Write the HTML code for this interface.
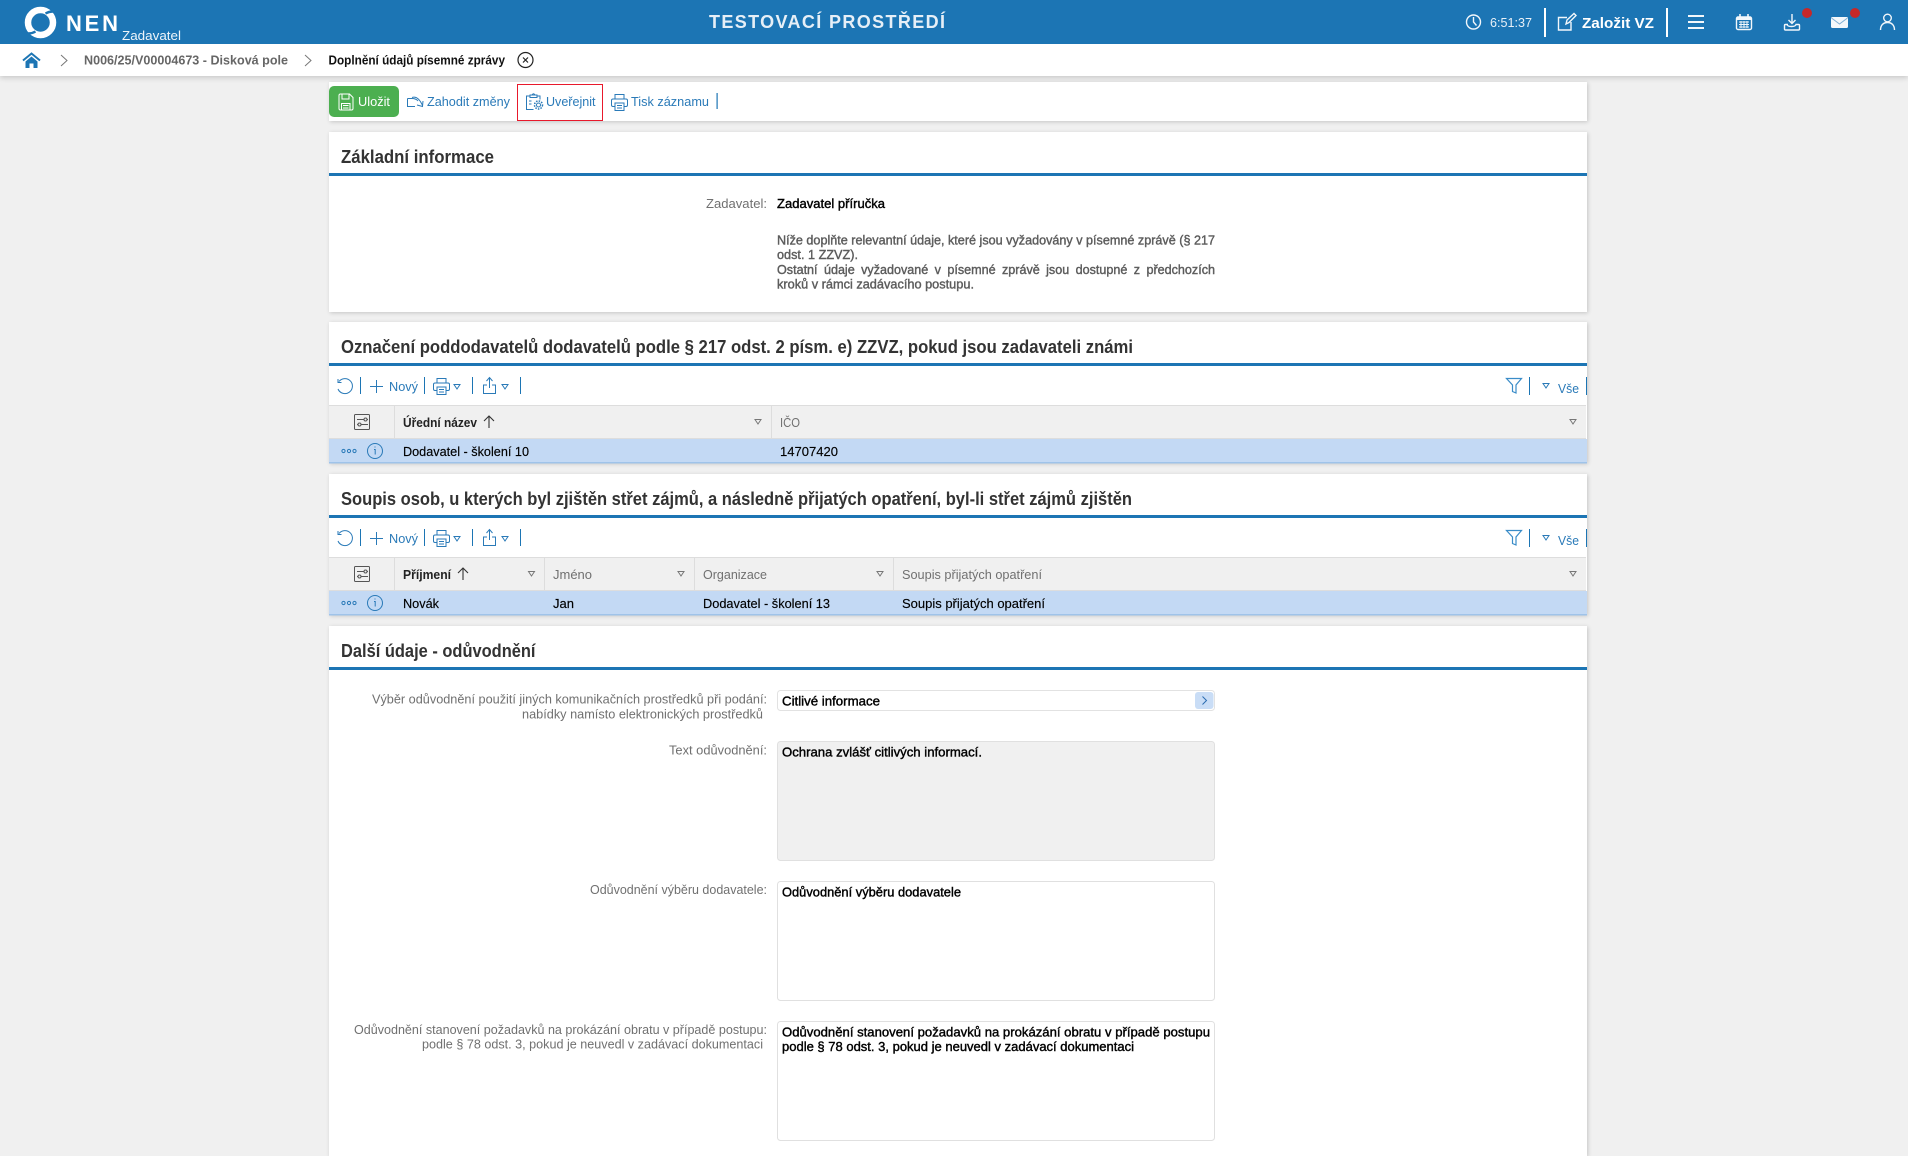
<!DOCTYPE html>
<html lang="cs">
<head>
<meta charset="utf-8">
<title>Doplnění údajů písemné zprávy</title>
<style>
html,body{margin:0;padding:0;background:#f0f0f0;width:1908px;height:1146px;overflow:hidden;font-family:"Liberation Sans",sans-serif}
.b{position:absolute}
.p{position:absolute;left:329px;width:1258px;background:#fff;box-shadow:1px 1px 4px rgba(0,0,0,.18)}
svg{position:absolute;left:0;top:0}
text{font-family:"Liberation Sans",sans-serif;font-size:13px;white-space:pre}
.l{fill:#707070}
.v{fill:#000;stroke:#000;stroke-width:.4}
.g{fill:#5c5c5c;stroke:#5c5c5c;stroke-width:.4}
.r{fill:#000;stroke:#000;stroke-width:.15}
.h{font-size:18px;font-weight:bold;fill:#333}
.a{fill:#2a7ab8}
.ic{fill:none;stroke:#2a7ab8;stroke-width:1}
.tg{fill:none;stroke:#777;stroke-width:1}
.hi{fill:none;stroke:#f2f7fb;stroke-width:1.4}
</style>
</head>
<body>
<div class="b" style="left:0;top:44px;width:1908px;height:32px;background:#fff;box-shadow:0 2px 5px rgba(0,0,0,.16)"></div>
<div class="b" style="left:0;top:0;width:1908px;height:44px;background:#1c75b4"></div>

<div class="p" style="top:82px;height:39px"></div>
<div class="p" style="top:132px;height:180px"></div>
<div class="p" style="top:322px;height:141px"></div>
<div class="p" style="top:474px;height:141px"></div>
<div class="p" style="top:626px;height:530px"></div>

<svg width="1908" height="1146" viewBox="0 0 1908 1146" xmlns="http://www.w3.org/2000/svg">
<!-- header logo -->
<g transform="translate(40.5 22.5)">
<circle r="12.500" fill="none" stroke="#fff" stroke-width="6.500"/>
<path d="M5-9Q12-13 19-9M-5 9Q-12 13-19 9" fill="none" stroke="#1c75b4" stroke-width="2.400"/>
</g>
<text x="66" y="31" textLength="52" lengthAdjust="spacing" style="font-size:22px;font-weight:bold" fill="#fff">NEN</text>
<text x="122" y="40" textLength="59" lengthAdjust="spacingAndGlyphs" fill="#eef5fa">Zadavatel</text>
<text x="709" y="28" textLength="236" lengthAdjust="spacing" style="font-size:18px;font-weight:bold" fill="#e6eff7">TESTOVACÍ PROSTŘEDÍ</text>

<!-- header right -->
<circle class="hi" cx="1473.5" cy="22" r="7"/><path class="hi" d="M1473.5 17v5l3 3.5"/>
<text x="1490" y="27" textLength="42" lengthAdjust="spacingAndGlyphs" fill="#e8f0f7">6:51:37</text>
<rect x="1544" y="8" width="2" height="29" fill="#fff"/>
<path class="hi" d="M1567 17.5h-8.5v12.5h12.5v-8M1566 24l1-4 7-6.5 2 2-7 7z"/>
<text x="1582" y="28" textLength="72" lengthAdjust="spacingAndGlyphs" style="font-size:15px;font-weight:bold" fill="#fff">Založit VZ</text>
<rect x="1666" y="8" width="2" height="29" fill="#fff"/>
<path d="M1688 16h16M1688 22h16M1688 28h16" stroke="#f2f7fb" stroke-width="2" fill="none"/>
<rect class="hi" x="1736.5" y="17" width="15" height="12.5" rx="1.5"/>
<rect x="1737" y="17" width="14" height="3" fill="#f2f7fb"/>
<path d="M1740 14v4M1748 14v4" stroke="#f2f7fb" stroke-width="1.600"/>
<path d="M1739 22h10M1739 24.500h10M1739 27h10M1741 21v7M1744 21v7M1747 21v7" stroke="#f2f7fb" stroke-width="1"/>
<path class="hi" d="M1792 14v9M1788.5 20l3.500 3.500 3.500-3.500M1788 24.500h-2.500q-1 0-1 1v3.500q0 1 1 1h13q1 0 1-1v-3.500q0-1-1-1h-2.500q-.5 2-4.500 2t-4.500-2"/>
<circle cx="1807" cy="13" r="5" fill="#c62828"/>
<rect x="1831" y="17" width="17" height="11" rx="1.500" fill="#f4f8fb"/>
<path d="M1831.500 18l8 6 8-6" stroke="#7fb0d6" stroke-width="1" fill="none"/>
<circle cx="1855" cy="13" r="5" fill="#c62828"/>
<circle class="hi" cx="1887.500" cy="18" r="3.800"/>
<path class="hi" d="M1880.500 30c0-5 3-7.500 7-7.500s7 2.500 7 7.500"/>

<!-- breadcrumb -->
<path d="M23 60.500 31.500 53.500 40 60.500" fill="none" stroke="#1c75b4" stroke-width="2"/>
<path d="M25.500 61.500 31.500 56.500 37.500 61.500V68H33.500V63.500H29.500V68H25.500Z" fill="#1c75b4"/>
<path d="M61 55l6 5.500-6 5.500" fill="none" stroke="#777" stroke-width="1"/>
<text x="84" y="64.500" textLength="204" lengthAdjust="spacingAndGlyphs" style="font-weight:bold" fill="#666">N006/25/V00004673 - Disková pole</text>
<path d="M305 55l6 5.500-6 5.500" fill="none" stroke="#777" stroke-width="1"/>
<text x="328.500" y="64.500" textLength="176.500" lengthAdjust="spacingAndGlyphs" style="font-weight:bold" fill="#111">Doplnění údajů písemné zprávy</text>
<circle cx="525.500" cy="60" r="7.500" fill="none" stroke="#222" stroke-width="1.200"/>
<path d="M523 57.500l5 5M528 57.500l-5 5" stroke="#222" stroke-width="1.200"/>

<!-- toolbar -->
<rect x="329" y="86" width="70" height="31" rx="5" fill="#4caf50"/>
<path d="M339 95.500q0-1.500 1.500-1.500h9l3.500 3.500v11q0 1.500-1.500 1.500h-11q-1.500 0-1.500-1.500zM342 94.500v4.500h7v-4.500M341.500 110v-6.500h8.500v6.500M343 105.500h5.500M343 108h5.500" fill="none" stroke="#fff" stroke-width="1"/>
<text x="358" y="106" textLength="32" lengthAdjust="spacingAndGlyphs" fill="#fff">Uložit</text>
<path class="ic" d="M407.500 98.500h5M407.500 98.500v8h7.500M412 97.500q6-2 10.500 8M417 105l5.500 1.500 .5-5.500M412 98.500q4 0 6 2.500"/>
<text class="a" x="427" y="106" textLength="83" lengthAdjust="spacingAndGlyphs">Zahodit změny</text>
<rect x="517.500" y="84.500" width="85" height="36" fill="none" stroke="#e8192c" stroke-width="1"/>
<path class="ic" d="M530 96h-3.500v13.500h7M537 96h3v3.500M530 95h7v2.500h-7zM532 95q1.500-2.500 3 0M529 101h2.500M529 104h2.500"/>
<circle class="ic" cx="538.500" cy="105" r="2"/>
<circle cx="538.500" cy="105" r="4" fill="none" stroke="#2a7ab8" stroke-width="1.500" stroke-dasharray="1.500 1.200"/>
<text class="a" x="546" y="106" textLength="49.500" lengthAdjust="spacingAndGlyphs">Uveřejnit</text>
<g transform="translate(178 16)"><path class="ic" d="M437 83v-4.500h9v4.500M437 90.500h-2q-1.500 0-1.500-1.500v-4.500q0-1.500 1.500-1.500h13q1.500 0 1.500 1.500V389q0 1.500-1.500 1.500h-2M437 87h9v7.500h-9zM439 89.500h5M439 92h5" style="display:none"/><path class="ic" d="M437 83v-4.500h9v4.500M437 90.500h-2q-1.500 0-1.500-1.500v-4.500q0-1.500 1.500-1.500h13q1.500 0 1.500 1.500V89q0 1.500-1.500 1.500h-2M437 87h9v7.500h-9zM439 89.500h5M439 92h5"/></g>
<text class="a" x="631" y="106" textLength="78" lengthAdjust="spacingAndGlyphs">Tisk záznamu</text>
<rect x="716.500" y="93" width="1.200" height="16" fill="#1c75b4"/>

<!-- section 1 -->
<text class="h" x="341" y="163" textLength="153" lengthAdjust="spacingAndGlyphs">Základní informace</text>
<rect x="329" y="173" width="1258" height="3" fill="#1c75b4"/>
<text class="l" x="706" y="208" textLength="61" lengthAdjust="spacingAndGlyphs">Zadavatel:</text>
<text class="v" x="777" y="208" textLength="108" lengthAdjust="spacingAndGlyphs">Zadavatel příručka</text>
<text class="g" x="777" y="244.500" textLength="438" lengthAdjust="spacingAndGlyphs">Níže doplňte relevantní údaje, které jsou vyžadovány v písemné zprávě (§ 217</text>
<text class="g" x="777" y="259" textLength="81" lengthAdjust="spacingAndGlyphs">odst. 1 ZZVZ).</text>
<text class="g" x="777" y="274" textLength="438" lengthAdjust="spacingAndGlyphs" style="word-spacing:3px">Ostatní údaje vyžadované v písemné zprávě jsou dostupné z předchozích</text>
<text class="g" x="777" y="288.500" textLength="197" lengthAdjust="spacingAndGlyphs">kroků v rámci zadávacího postupu.</text>

<!-- section 2 -->
<text class="h" x="341" y="353" textLength="792" lengthAdjust="spacingAndGlyphs">Označení poddodavatelů dodavatelů podle § 217 odst. 2 písm. e) ZZVZ, pokud jsou zadavateli známi</text>
<rect x="329" y="363" width="1258" height="3" fill="#1c75b4"/>
<!-- grid toolbar 1 -->
<path class="ic" d="M339 381.500A7.500 7.500 0 1 1 338 389M338 379v3.500h3.500"/>
<rect x="360" y="377" width="1" height="17" fill="#1c75b4"/>
<path class="ic" d="M376.500 380v13M370 386.500h13"/>
<text class="a" x="389" y="391" textLength="29" lengthAdjust="spacingAndGlyphs">Nový</text>
<rect x="424" y="377" width="1" height="17" fill="#1c75b4"/>
<path class="ic" d="M437 383v-4.500h9v4.500M437 390.500h-2q-1.500 0-1.500-1.500v-4.500q0-1.500 1.500-1.500h13q1.500 0 1.500 1.500V389q0 1.500-1.500 1.500h-2M437 387h9v7.500h-9zM439 389.500h5M439 392h5"/>
<path class="ic" d="M454 384.500h6l-3 4.500z"/>
<rect x="472" y="377" width="1" height="17" fill="#1c75b4"/>
<path class="ic" d="M487 385h-3.500v8.500h12V385H492M489.500 388v-10M486.500 381l3-3.500 3 3.500"/>
<path class="ic" d="M502 384.500h6l-3 4.500z"/>
<rect x="520" y="377" width="1" height="17" fill="#1c75b4"/>
<path d="M1506.500 378.500h15l-5.500 6.500v8l-3.500-1.500V385z" fill="none" stroke="#3a8cc8" stroke-width="1.200"/>
<rect x="1529" y="377" width="1" height="18" fill="#1c75b4"/>
<path class="ic" d="M1543 383.500h6l-3 4.500z"/>
<text class="a" x="1558" y="393" textLength="21" lengthAdjust="spacingAndGlyphs">Vše</text>
<rect x="1586" y="377" width="1" height="18" fill="#1c75b4"/>
<!-- grid table 1 -->
<rect x="329" y="405" width="1257" height="34" fill="#f0f0f0"/>
<rect x="329" y="405" width="1257" height="1" fill="#ddd"/>
<rect x="329" y="438" width="1257" height="1" fill="#ddd"/>
<rect x="394" y="406" width="1" height="32" fill="#ddd"/>
<rect x="771" y="406" width="1" height="32" fill="#ddd"/>
<rect x="354.500" y="414.500" width="15" height="15" rx="1" fill="none" stroke="#555" stroke-width="1"/>
<path d="M357 419.500h7M367 419.500h1M357 424.500h1M361 424.500h7" stroke="#555" stroke-width="1"/>
<circle cx="365.500" cy="419.500" r="1.500" fill="none" stroke="#555"/><circle cx="359.500" cy="424.500" r="1.500" fill="none" stroke="#555"/>
<text x="403" y="427" textLength="74" lengthAdjust="spacingAndGlyphs" style="font-weight:bold" fill="#222">Úřední název</text>
<path d="M489 428v-12M484 421l5-5 5 5" fill="none" stroke="#333" stroke-width="1.100"/>
<path class="tg" d="M755 419.500h6l-3 4.500z"/>
<text class="l" x="780" y="427" textLength="20" lengthAdjust="spacingAndGlyphs">IČO</text>
<path class="tg" d="M1570 419.500h6l-3 4.500z"/>
<rect x="329" y="439" width="1258" height="24" fill="#c3d9f4"/>
<rect x="329" y="462" width="1258" height="1.500" fill="#9fc3e9"/>
<circle class="ic" cx="343.500" cy="451" r="1.600"/><circle class="ic" cx="349" cy="451" r="1.600"/><circle class="ic" cx="354.500" cy="451" r="1.600"/>
<circle class="ic" cx="375" cy="451" r="7.500"/><path class="ic" d="M375 446.500v1M374 449.500h1.200v5"/>
<text class="r" x="403" y="456" textLength="126" lengthAdjust="spacingAndGlyphs">Dodavatel - školení 10</text>
<text class="r" x="780" y="456" textLength="58" lengthAdjust="spacingAndGlyphs">14707420</text>

<!-- section 3 -->
<text class="h" x="341" y="505" textLength="791" lengthAdjust="spacingAndGlyphs">Soupis osob, u kterých byl zjištěn střet zájmů, a následně přijatých opatření, byl-li střet zájmů zjištěn</text>
<rect x="329" y="515" width="1258" height="3" fill="#1c75b4"/>
<g transform="translate(0 152)">
<path class="ic" d="M339 381.500A7.500 7.500 0 1 1 338 389M338 379v3.500h3.500"/>
<rect x="360" y="377" width="1" height="17" fill="#1c75b4"/>
<path class="ic" d="M376.500 380v13M370 386.500h13"/>
<text class="a" x="389" y="391" textLength="29" lengthAdjust="spacingAndGlyphs">Nový</text>
<rect x="424" y="377" width="1" height="17" fill="#1c75b4"/>
<path class="ic" d="M437 383v-4.500h9v4.500M437 390.500h-2q-1.500 0-1.500-1.500v-4.500q0-1.500 1.500-1.500h13q1.500 0 1.500 1.500V389q0 1.500-1.500 1.500h-2M437 387h9v7.500h-9zM439 389.500h5M439 392h5"/>
<path class="ic" d="M454 384.500h6l-3 4.500z"/>
<rect x="472" y="377" width="1" height="17" fill="#1c75b4"/>
<path class="ic" d="M487 385h-3.500v8.500h12V385H492M489.500 388v-10M486.500 381l3-3.500 3 3.500"/>
<path class="ic" d="M502 384.500h6l-3 4.500z"/>
<rect x="520" y="377" width="1" height="17" fill="#1c75b4"/>
<path d="M1506.500 378.500h15l-5.500 6.500v8l-3.500-1.500V385z" fill="none" stroke="#3a8cc8" stroke-width="1.200"/>
<rect x="1529" y="377" width="1" height="18" fill="#1c75b4"/>
<path class="ic" d="M1543 383.500h6l-3 4.500z"/>
<text class="a" x="1558" y="393" textLength="21" lengthAdjust="spacingAndGlyphs">Vše</text>
<rect x="1586" y="377" width="1" height="18" fill="#1c75b4"/>
<rect x="329" y="405" width="1257" height="34" fill="#f0f0f0"/>
<rect x="329" y="405" width="1257" height="1" fill="#ddd"/>
<rect x="329" y="438" width="1257" height="1" fill="#ddd"/>
<rect x="394" y="406" width="1" height="32" fill="#ddd"/>
<rect x="544" y="406" width="1" height="32" fill="#ddd"/>
<rect x="694" y="406" width="1" height="32" fill="#ddd"/>
<rect x="893" y="406" width="1" height="32" fill="#ddd"/>
<rect x="354.500" y="414.500" width="15" height="15" rx="1" fill="none" stroke="#555" stroke-width="1"/>
<path d="M357 419.500h7M367 419.500h1M357 424.500h1M361 424.500h7" stroke="#555" stroke-width="1"/>
<circle cx="365.500" cy="419.500" r="1.500" fill="none" stroke="#555"/><circle cx="359.500" cy="424.500" r="1.500" fill="none" stroke="#555"/>
<text x="403" y="427" textLength="48" lengthAdjust="spacingAndGlyphs" style="font-weight:bold" fill="#222">Příjmení</text>
<path d="M463 428v-12M458 421l5-5 5 5" fill="none" stroke="#333" stroke-width="1.100"/>
<path class="tg" d="M528.500 419.500h6l-3 4.500z"/>
<text class="l" x="553" y="427" textLength="39" lengthAdjust="spacingAndGlyphs">Jméno</text>
<path class="tg" d="M678 419.500h6l-3 4.500z"/>
<text class="l" x="703" y="427" textLength="64" lengthAdjust="spacingAndGlyphs">Organizace</text>
<path class="tg" d="M877 419.500h6l-3 4.500z"/>
<text class="l" x="902" y="427" textLength="140" lengthAdjust="spacingAndGlyphs">Soupis přijatých opatření</text>
<path class="tg" d="M1570 419.500h6l-3 4.500z"/>
<rect x="329" y="439" width="1258" height="24" fill="#c3d9f4"/>
<rect x="329" y="462" width="1258" height="1.500" fill="#9fc3e9"/>
<circle class="ic" cx="343.500" cy="451" r="1.600"/><circle class="ic" cx="349" cy="451" r="1.600"/><circle class="ic" cx="354.500" cy="451" r="1.600"/>
<circle class="ic" cx="375" cy="451" r="7.500"/><path class="ic" d="M375 446.500v1M374 449.500h1.200v5"/>
<text class="r" x="403" y="456" textLength="36" lengthAdjust="spacingAndGlyphs">Novák</text>
<text class="r" x="553" y="456" textLength="21" lengthAdjust="spacingAndGlyphs">Jan</text>
<text class="r" x="703" y="456" textLength="127" lengthAdjust="spacingAndGlyphs">Dodavatel - školení 13</text>
<text class="r" x="902" y="456" textLength="143" lengthAdjust="spacingAndGlyphs">Soupis přijatých opatření</text>
</g>

<!-- section 4 -->
<text class="h" x="341" y="657" textLength="194.500" lengthAdjust="spacingAndGlyphs">Další údaje - odůvodnění</text>
<rect x="329" y="667" width="1258" height="3" fill="#1c75b4"/>

<text class="l" x="372" y="703.500" textLength="395" lengthAdjust="spacingAndGlyphs">Výběr odůvodnění použití jiných komunikačních prostředků při podání:</text>
<text class="l" x="522" y="718.500" textLength="241" lengthAdjust="spacingAndGlyphs">nabídky namísto elektronických prostředků</text>
<rect x="777.500" y="690.500" width="437" height="20" rx="3" fill="#fff" stroke="#e2e2e2"/>
<rect x="1195" y="692" width="18.500" height="17" rx="3" fill="#c9ddf6"/>
<path d="M1202.500 696.500l4 4-4 4" fill="none" stroke="#2a6cb0" stroke-width="1"/>
<text class="v" x="782" y="705.500" textLength="98" lengthAdjust="spacingAndGlyphs">Citlivé informace</text>

<text class="l" x="669" y="754.500" textLength="98" lengthAdjust="spacingAndGlyphs">Text odůvodnění:</text>
<rect x="777.500" y="741.500" width="437" height="119" rx="3" fill="#f0f0f0" stroke="#e0e0e0"/>
<text class="v" x="782" y="756.500" textLength="200" lengthAdjust="spacingAndGlyphs">Ochrana zvlášť citlivých informací.</text>

<text class="l" x="590" y="894" textLength="177" lengthAdjust="spacingAndGlyphs">Odůvodnění výběru dodavatele:</text>
<rect x="777.500" y="881.500" width="437" height="119" rx="3" fill="#fff" stroke="#e0e0e0"/>
<text class="v" x="782" y="896.500" textLength="179" lengthAdjust="spacingAndGlyphs">Odůvodnění výběru dodavatele</text>

<text class="l" x="354" y="1034" textLength="413" lengthAdjust="spacingAndGlyphs">Odůvodnění stanovení požadavků na prokázání obratu v případě postupu:</text>
<text class="l" x="422" y="1048.500" textLength="341" lengthAdjust="spacingAndGlyphs">podle § 78 odst. 3, pokud je neuvedl v zadávací dokumentaci</text>
<rect x="777.500" y="1021.500" width="437" height="119" rx="3" fill="#fff" stroke="#e0e0e0"/>
<text class="v" x="782" y="1036.500" textLength="428" lengthAdjust="spacingAndGlyphs">Odůvodnění stanovení požadavků na prokázání obratu v případě postupu</text>
<text class="v" x="782" y="1051" textLength="352" lengthAdjust="spacingAndGlyphs">podle § 78 odst. 3, pokud je neuvedl v zadávací dokumentaci</text>
</svg>
</body>
</html>
